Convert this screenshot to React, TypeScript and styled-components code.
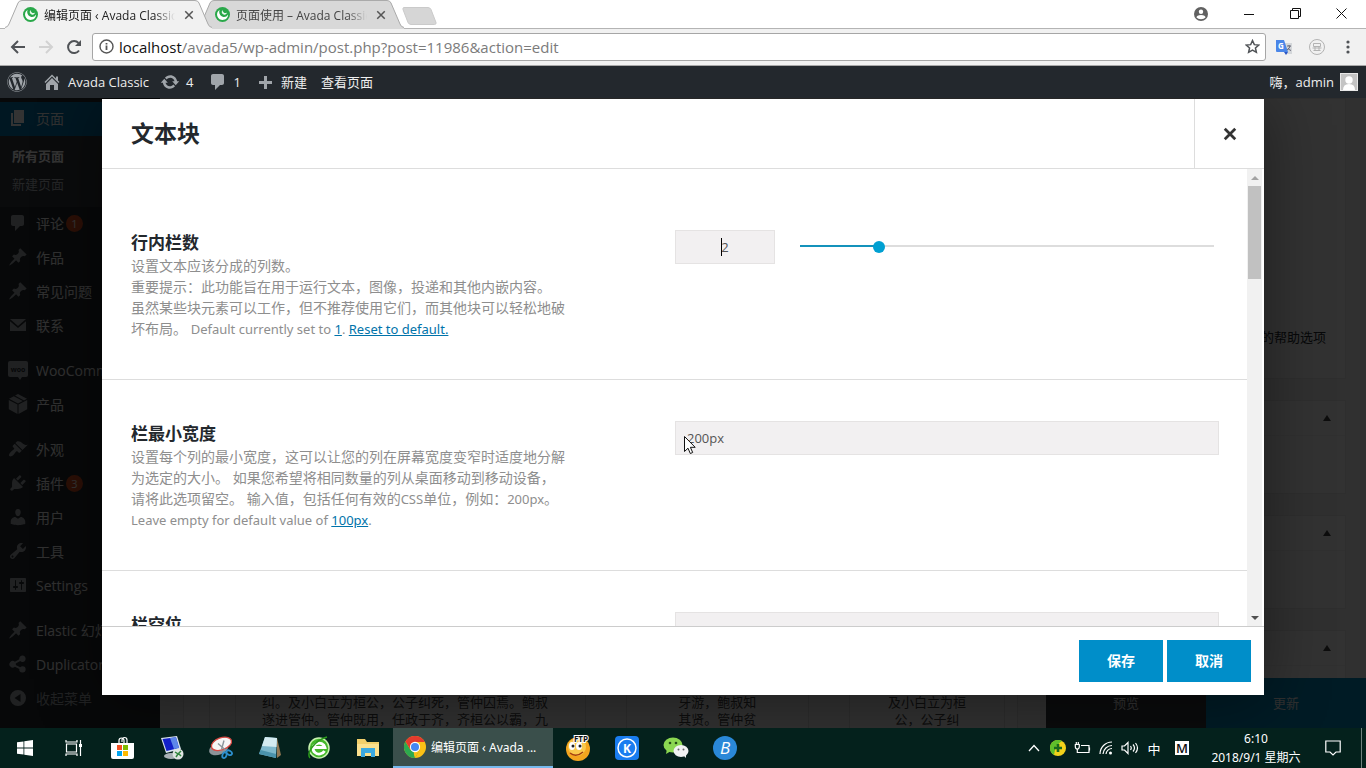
import React from "react";
import styled, { createGlobalStyle, css } from "styled-components";
import { FaWordpress } from "react-icons/fa";

const sans = `"Open Sans", "Noto Sans CJK SC", sans-serif`;
const wide = `"Noto Sans", "Noto Sans CJK SC", sans-serif`;

const GlobalStyle = createGlobalStyle`
  *, *::before, *::after { box-sizing: border-box; }
  html, body { margin: 0; padding: 0; }
  body { font-family: ${sans}; font-size: 13px; background: #fff; color: #23282d; overflow: hidden; }
  button, input { font-family: inherit; margin: 0; }
  button { border: 0; padding: 0; background: none; color: inherit; }
  svg { display: block; flex: none; }
  a { color: inherit; text-decoration: none; }
`;

const Screen = styled.div`
  display: flex;
  flex-direction: column;
  height: 100vh;
`;

/* ---------- browser window ---------- */

const TabStrip = styled.header`
  display: flex;
  height: 28px;
  background: #fff;
  padding: 0 2px 0 5px;
`;

const TabShell = styled.div<{ $active?: boolean }>`
  position: relative;
  z-index: ${(p) => (p.$active ? 2 : 1)};
  width: 207px;
  height: 29px;
  margin-right: -15px;
  padding: 0 15px 0 18px;
  display: flex;
  align-items: center;
  gap: 6px;
  font-size: 12px;
  color: ${(p) => (p.$active ? "#222" : "#444")};
`;

const TabShape = styled.svg`
  position: absolute;
  inset: 0;
  width: 100%;
  height: 100%;
  z-index: -1;
`;

const TabTitle = styled.span`
  flex: 1;
  min-width: 0;
  overflow: hidden;
  white-space: nowrap;
  mask-image: linear-gradient(to right, #000 85%, transparent);
`;

const IconButton = styled.button<{ $w?: number; $h?: number }>`
  width: ${(p) => p.$w ?? 16}px;
  height: ${(p) => p.$h ?? 16}px;
  display: flex;
  align-items: center;
  justify-content: center;
  flex: none;
`;

const NewTab = styled.button`
  margin: 7px 0 0 13px;
  width: 36px;
  height: 18px;
`;

const WindowControls = styled.div`
  display: flex;
  margin-left: auto;
  height: 27px;
`;

const Toolbar = styled.div`
  display: flex;
  align-items: center;
  height: 38px;
  padding: 0 5px 1px 4px;
  background: #f1f1f1;
  border-top: 1px solid #b4b4b4;
  border-bottom: 1px solid #a8a8a8;
  color: #505357;
`;

const Omnibox = styled.div`
  flex: 1;
  display: flex;
  align-items: center;
  gap: 5px;
  height: 28px;
  margin: 0 3px 0 4px;
  padding: 0 5px 0 6px;
  background: #fff;
  border: 1px solid #a6a6a6;
  border-radius: 3px;
`;

const Url = styled.span`
  flex: 1;
  font-size: 15px;
  line-height: 20px;
  color: #7b7b7b;
  b { font-weight: 400; color: #111; }
`;

/* ---------- WordPress admin ---------- */

const AdminBar = styled.nav`
  display: flex;
  align-items: center;
  height: 32px;
  padding: 0 8px 0 7px;
  background: #23282d;
  color: #eee;
  font-size: 13px;
  svg { color: #a0a5aa; }
`;

const BarLink = styled.a<{ $gap?: number }>`
  display: flex;
  align-items: center;
  gap: 6px;
  margin-right: ${(p) => p.$gap ?? 14}px;
  line-height: 18px;
  white-space: nowrap;
`;

const Account = styled(BarLink)`
  margin-left: auto;
  margin-right: 0;
`;

const Workspace = styled.div`
  position: relative;
  flex: 1;
  min-height: 0;
  display: flex;
  overflow: hidden;
  background: #f1f1f1;
`;

const SideMenu = styled.nav`
  width: 160px;
  flex: none;
  padding-top: 4px;
  background: #23282d;
  color: #eee;
  font-size: 14px;
`;

const MenuItem = styled.a<{ $current?: boolean; $gap?: boolean; $muted?: boolean }>`
  display: flex;
  align-items: center;
  height: 34px;
  margin-top: ${(p) => (p.$gap ? 11 : 0)}px;
  padding: 0 0 2px 8px;
  gap: 8px;
  white-space: nowrap;
  background: ${(p) => (p.$current ? "#0073aa" : "transparent")};
  color: ${(p) => (p.$muted ? "#a0a5aa" : "#eee")};
  svg { color: ${(p) => (p.$current ? "#fff" : "#a0a5aa")}; }
`;

const Count = styled.span`
  width: 17px;
  height: 17px;
  margin-left: -6px;
  border-radius: 50%;
  background: #d54e21;
  color: #fff;
  font-size: 11px;
  line-height: 17px;
  text-align: center;
`;

const SubMenu = styled.div`
  padding: 6px 12px 9px;
  background: #32373c;
  font-size: 13px;
  line-height: 28px;
`;

const SubLink = styled.a<{ $current?: boolean }>`
  display: block;
  font-weight: ${(p) => (p.$current ? 700 : 400)};
  color: ${(p) => (p.$current ? "#fff" : "#b4b9be")};
`;

const Editor = styled.main`
  flex: 1;
  display: flex;
  flex-direction: column;
  justify-content: flex-end;
  padding: 0 48px 0 23px;
`;

const Builder = styled.section`
  flex: 0 0 560px;
  display: flex;
  padding: 0 12px 0 25px;
  border: solid #ddd;
  border-width: 0 1px;
  background: #f4f4f4;
`;

const BuilderRow = styled.div`
  flex: 1;
  display: flex;
  gap: 40px;
  padding-left: 25px;
  border-left: 1px solid #ddd;
`;

const BuilderColumn = styled.div<{ $size: number; $left?: boolean }>`
  flex: ${(p) => p.$size} 1 ${(p) => p.$size}px;
  min-width: 0;
  padding: 529px ${(p) => (p.$left ? 26 : 12)}px 0;
  border: solid #ddd;
  border-width: 0 1px;
  line-height: 17px;
  text-align: ${(p) => (p.$left ? "left" : "center")};
  white-space: nowrap;
  color: #444;
`;

const Aside = styled.aside`
  width: 300px;
  flex: none;
  padding-right: 20px;
`;

const MetaBox = styled.section<{ $tall?: boolean }>`
  height: ${(p) => (p.$tall ? 281 : 94)}px;
  margin-bottom: 21px;
  background: #f8f8f8;
  border: 1px solid #e5e5e5;
  text-align: right;
`;

const HelpText = styled.p`
  margin: 0;
  padding: 228px 19px 0 0;
  line-height: 20px;
`;

const MetaHead = styled.button`
  display: flex;
  width: 100%;
  height: 35px;
  padding-right: 14px;
  align-items: center;
  justify-content: flex-end;
  border-bottom: 1px solid #eee;
`;

const PublishBar = styled.div`
  position: absolute;
  right: 0;
  bottom: 0;
  display: flex;
`;

const PublishButton = styled.button<{ $primary?: boolean }>`
  width: 160px;
  height: 50px;
  padding-bottom: 2px;
  font-size: 13px;
  color: #eee;
  background: ${(p) => (p.$primary ? "#0085ba" : "#32373c")};
`;

/* ---------- dialog ---------- */

const Overlay = styled.div`
  position: absolute;
  inset: 0;
  z-index: 5;
  display: flex;
  padding: 1px 102px 33px;
  background: rgba(0, 0, 0, 0.8);
`;

const Dialog = styled.section`
  flex: 1;
  min-width: 0;
  display: flex;
  flex-direction: column;
  background: #fff;
  box-shadow: 0 5px 60px rgba(0, 0, 0, 0.4);
`;

const DialogHead = styled.header`
  display: flex;
  align-items: center;
  height: 70px;
  flex: none;
  padding-left: 29px;
  border-bottom: 1px solid #ddd;
`;

const DialogTitle = styled.h2`
  flex: 1;
  margin: 0;
  padding-bottom: 2px;
  font-size: 23px;
  line-height: 30px;
`;

const CloseButton = styled.button`
  align-self: stretch;
  width: 70px;
  display: flex;
  align-items: center;
  justify-content: center;
  border-left: 1px solid #ddd;
`;

const DialogBody = styled.div`
  flex: 1;
  min-height: 0;
  display: flex;
  overflow: hidden;
`;

const Options = styled.div`
  flex: 1;
  min-width: 0;
  padding-top: 20px;
`;

const Option = styled.div`
  display: grid;
  grid-template-columns: 1fr 1fr;
  padding: 41px 28px 40px 29px;
  border-bottom: 1px solid #ddd;
`;

const OptionName = styled.label`
  display: block;
  padding-top: 1px;
  font-size: 17px;
  font-weight: 700;
  line-height: 24px;
`;

const Description = styled.p`
  margin: 0;
  font-size: 14px;
  line-height: 21px;
  color: #8e8e8e;
  white-space: nowrap;
  a { color: #0073aa; text-decoration: underline; }
`;

const Latin = styled.span`
  font-family: ${wide};
  font-size: 13px;
  line-height: 1;
`;

const field = css`
  height: 34px;
  border: 1px solid #e5e3e3;
  border-radius: 0;
  background: #f2f0f1;
  color: #555;
  font-size: 13px;
  outline: none;
`;

const FieldBox = styled.div`
  position: relative;
`;

const TextField = styled.input`
  ${field}
  width: 100%;
  padding: 0 11px;
`;

const RangeRow = styled.div`
  display: flex;
  align-items: flex-start;
  gap: 25px;
  padding-right: 5px;
`;

const NumberBox = styled.div`
  position: relative;
  width: 100px;
  flex: none;
`;

const NumberField = styled.input`
  ${field}
  width: 100%;
  padding: 0;
  text-align: center;
`;

const Caret = styled.span`
  position: absolute;
  left: 46px;
  top: 8px;
  width: 1px;
  height: 18px;
  background: #000;
`;

const Range = styled.input`
  flex: 1;
  min-width: 0;
  height: 34px;
  appearance: none;
  background: linear-gradient(to right, #1492bb 19%, #ddd 19%) 0 15px / 100% 2px no-repeat;
  &::-webkit-slider-thumb {
    appearance: none;
    width: 12px;
    height: 12px;
    border-radius: 50%;
    background: #00a0d2;
  }
`;

const Pointer = styled.svg`
  position: absolute;
  left: 8px;
  top: 14px;
`;

const ScrollBar = styled.div`
  width: 17px;
  flex: none;
  display: flex;
  flex-direction: column;
  align-items: center;
  justify-content: space-between;
  border-right: 2px solid #fff;
  background: #f1f1f1;
`;

const ScrollTop = styled.div`
  width: 13px;
`;

const ScrollArrow = styled.div`
  display: flex;
  justify-content: center;
`;

const Thumb = styled.div`
  height: 93px;
  background: #c1c1c1;
`;

const DialogFoot = styled.footer`
  display: flex;
  justify-content: flex-end;
  gap: 4px;
  flex: none;
  padding: 13px;
  border-top: 1px solid #ccc;
`;

const ActionButton = styled.button`
  width: 84px;
  height: 42px;
  padding-bottom: 2px;
  background: #008ec9;
  color: #fff;
  font-size: 14px;
  font-weight: 700;
`;

/* ---------- taskbar ---------- */

const Taskbar = styled.footer`
  display: flex;
  height: 40px;
  flex: none;
  background: #04211c;
  color: #fff;
  font-size: 12px;
`;

const Launcher = styled(IconButton)`
  width: 49px;
  height: 40px;
`;

const RunningApp = styled.button`
  display: flex;
  align-items: center;
  gap: 5px;
  width: 160px;
  height: 40px;
  margin-left: 1px;
  padding: 0 11px;
  background: #3a4f4b;
  border-bottom: 2px solid #76b9ed;
  font-family: ${wide};
  font-size: 12px;
  white-space: nowrap;
`;

const Tray = styled.div`
  display: flex;
  align-items: center;
  margin-left: auto;
  padding-right: 4px;
`;

const TrayItem = styled.button<{ $wide?: boolean }>`
  width: ${(p) => (p.$wide ? 32 : 24)}px;
  height: 40px;
  display: flex;
  align-items: center;
  justify-content: center;
  font-size: 13px;
`;

const Clock = styled.time`
  width: 116px;
  margin-right: 3px;
  font-family: ${wide};
  text-align: center;
  line-height: 19px;
`;

const ShowDesktop = styled.span`
  width: 1px;
  height: 40px;
  margin-left: 12px;
  background: #6f827e;
`;

/* ---------- icons ---------- */

const dash: Record<string, string> = {
  page: "M6 15V2h10v13H6zm-1 1h8v2H3V5h2v11z",
  comment: "M5 2h9c1.1 0 2 .9 2 2v7c0 1.1-.9 2-2 2h-2l-5 5v-5H5c-1.1 0-2-.9-2-2V4c0-1.1.9-2 2-2z",
  pin: "M10.44 3.02l1.82-1.82 6.36 6.35-1.83 1.82c-1.05-.68-2.48-.57-3.41.36l-.75.75c-.92.93-1.04 2.35-.35 3.41l-1.83 1.82-2.41-2.41-2.8 2.79c-.42.42-3.38 2.71-3.8 2.29s1.86-3.39 2.28-3.81l2.79-2.79L4.1 9.36l1.83-1.82c1.05.69 2.48.57 3.4-.36l.75-.75c.93-.92 1.05-2.35.36-3.41z",
  mail: "M2 4h16l-8 7-8-7zM2 6.200l8 6.800 8-6.800V16H2z",
  woo: "M2 1h16a2 2 0 012 2v12a2 2 0 01-2 2h-4l-2 3-2-3H2a2 2 0 01-2-2V3a2 2 0 012-2z",
  box: "M10 0l9 4.800-3 1.600L7 1.600zM5.800 2.300l9 4.700-4.800 2.500L1 4.800zM.8 6l8.700 4.600V20L.8 15.200zM19.200 6l-8.700 4.600V20l8.700-4.800z",
  brush: "M14.48 11.06L7.41 3.99l1.5-1.5c.5-.56 2.3-.47 3.51.32 1.21.8 1.43 1.28 2.91 2.1 1.18.64 2.45 1.26 4.45.85zm-.71.71L6.7 4.7 4.93 6.47c-.39.39-.39 1.02 0 1.41l1.06 1.06c.39.39.39 1.03 0 1.42-.6.6-1.43 1.11-2.21 1.69-.35.26-.7.53-1.01.84C1.43 14.23.4 16.08 1.4 17.07c.99 1 2.84-.03 4.18-1.36.31-.31.58-.66.85-1.02.57-.78 1.08-1.61 1.69-2.21.39-.39 1.02-.39 1.41 0l1.06 1.06c.39.39 1.02.39 1.41 0z",
  plug: "M13.11 4.36L9.87 7.6 8 5.73l3.24-3.24c.35-.34 1.05-.2 1.56.32.52.51.66 1.21.31 1.55zm-8 1.77l.91-1.12 9.01 9.01-1.19.84c-.71.71-2.63 1.16-3.82 1.16H6.14L4.9 17.26c-.59.59-1.54.59-2.12 0-.59-.58-.59-1.53 0-2.12l1.24-1.24v-3.88c0-1.13.4-3.19 1.09-3.89zm7.26 3.97l3.24-3.24c.34-.35 1.04-.21 1.55.31.52.51.66 1.21.31 1.55l-3.24 3.25z",
  user: "M10 9.25c-2.27 0-2.73-3.44-2.73-3.44C7 4.02 7.82 2 9.97 2c2.16 0 2.98 2.02 2.71 3.81 0 0-.41 3.44-2.68 3.44zm0 2.57L12.72 10c2.39 0 4.52 2.33 4.52 4.53v2.49s-3.65 1.13-7.24 1.13c-3.65 0-7.24-1.13-7.24-1.13v-2.49c0-2.25 1.94-4.48 4.47-4.48z",
  wrench: "M16.68 9.77c-1.34 1.34-3.3 1.67-4.95.99l-5.41 6.52c-.99.99-2.59.99-3.58 0s-.99-2.59 0-3.57l6.52-5.42c-.68-1.65-.35-3.61.99-4.95 1.28-1.28 3.12-1.62 4.72-1.06l-2.89 2.89 2.82 2.82 2.86-2.87c.53 1.58.18 3.39-1.08 4.65zM3.81 16.21c.4.39 1.04.39 1.43 0 .4-.4.4-1.04 0-1.43-.39-.4-1.03-.4-1.43 0-.39.39-.39 1.03 0 1.43z",
  settings: "M18 16V4c0-.55-.45-1-1-1H3c-.55 0-1 .45-1 1v12c0 .55.45 1 1 1h14c.55 0 1-.45 1-1zM8 11h1c.55 0 1 .45 1 1s-.45 1-1 1H8v1.5c0 .28-.22.5-.5.5s-.5-.22-.5-.5V13H6c-.55 0-1-.45-1-1s.45-1 1-1h1V5.5c0-.28.22-.5.5-.5s.5.22.5.5V11zm5-2h-1c-.55 0-1-.45-1-1s.45-1 1-1h1V5.500c0-.28.22-.5.5-.5s.5.22.5.5V7h1c.55 0 1 .45 1 1s-.45 1-1 1h-1v5.5c0 .28-.22.5-.5.5s-.5-.22-.5-.5V9z",
  share: "M14.500 12.200c-.9 0-1.700.4-2.300 1L7.800 10.900c.1-.5.1-.9 0-1.400l4.400-2.500a3.200 3.200 0 10-.9-1.700L6.900 7.700a3.300 3.300 0 100 5l4.400 2.300a3.200 3.200 0 103.200-2.800z",
  collapse: "M10 2a8 8 0 100 16 8 8 0 000-16zm2.500 4v8L6.500 10z",
  home: "M16 8.5l1.53 1.53-1.06 1.06L10 4.6l-6.47 6.49-1.06-1.06L10 2.5l4 4v-2h2v4zm-6-2.46l6 5.99V18h-4v-5H8v5H4v-5.970z",
  update: "M10.2 3.28c3.53 0 6.43 2.61 6.92 6h2.08l-3.5 4-3.5-4h2.32c-.45-1.97-2.21-3.45-4.32-3.45-1.45 0-2.73.71-3.54 1.78L4.95 5.66C6.23 4.2 8.11 3.28 10.2 3.28zm-.4 13.44c-3.52 0-6.43-2.61-6.92-6H.8l3.5-4c1.17 1.33 2.33 2.67 3.5 4H5.48c.45 1.97 2.21 3.45 4.32 3.45 1.45 0 2.73-.71 3.54-1.78l1.71 1.95c-1.28 1.46-3.15 2.38-5.25 2.38z",
  plus: "M17 9v3h-5v5H9v-5H4V9h5V4h3v5h5z",
};

const Dash = ({ name }: { name: string }) => (
  <svg width="20" height="20" viewBox="0 0 20 20" fill="currentColor" fillRule="evenodd" aria-hidden="true">
    <path d={dash[name]} />
    {name === "woo" && (
      <text x="10" y="12" fontSize="7" fontWeight="700" textAnchor="middle" fill="#23282d">woo</text>
    )}
  </svg>
);

const Cross = ({ size, stroke, width }: { size: number; stroke: string; width: number }) => (
  <svg width={size} height={size} viewBox="0 0 12 12" stroke={stroke} strokeWidth={width} aria-hidden="true">
    <path d="M1.500 1.500l9 9M10.500 1.500l-9 9" />
  </svg>
);

const Favicon = () => (
  <svg width="15" height="15" viewBox="0 0 16 16" aria-hidden="true">
    <circle cx="8" cy="8" r="8" fill="#2aa84a" />
    <path d="M5 2.800C2.300 4.500 1.600 7.500 2.600 10c1.200 2.900 4 4.200 6.700 3.700 2.900-.5 4.800-3 4.700-5.700-1.300 2.200-3.200 3-5.200 2.600C6.300 10 4.600 7.800 4.500 5.500 4.400 4.500 4.600 3.600 5 2.800z" fill="#fff" />
    <path d="M8 3.300c-.9 1.200-1 2.600-.3 3.700.8 1.200 2.200 1.500 3.500.9.900-.4 1.500-1.200 1.600-2.100-1 .7-2.200.8-3.200.2-.9-.6-1.500-1.600-1.600-2.700z" fill="#e9f8ed" />
  </svg>
);

const Triangle = ({ down, color }: { down?: boolean; color: string }) => (
  <svg width="8" height="17" viewBox="0 0 8 17" fill={color} aria-hidden="true">
    <path d={down ? "M0 7h8l-4 4z" : "M0 11h8l-4-4z"} />
  </svg>
);

const PanelToggle = () => (
  <svg width="8" height="7" viewBox="0 0 8 7" fill="#444" aria-hidden="true">
    <path d="M0 6h8L4 0z" />
  </svg>
);

const launchers: [string, React.ReactNode][] = [
  ["开始", <svg width="16" height="16" viewBox="0 0 16 16" fill="#fff"><path d="M0 2.300L6.500 1.400v6.200H0zM7.300 1.300L16 0v7.600H7.300zM0 8.400h6.500v6.200L0 13.700zM7.300 8.400H16V16l-8.700-1.300z" /></svg>],
  ["任务视图", <svg width="18" height="16" viewBox="0 0 18 16" fill="none" stroke="#fff" strokeWidth="1.200"><path d="M1.500 4h10v8h-10zM1 0v2h11V0M1 16v-2h11v2M15.500 0v16" /><path d="M14 4h3v3h-3z" fill="#fff" stroke="none" /></svg>],
  ["应用商店", <svg width="24" height="24" viewBox="0 0 24 24"><path d="M8 8V4.500a2.500 2.500 0 015 0V8M11 6V4a2.500 2.500 0 015 0v4" fill="none" stroke="#fff" strokeWidth="1.200" /><path d="M0 7h23v14a2 2 0 01-2 2H2a2 2 0 01-2-2z" fill="#fff" /><path d="M6 9h5v5H6z" fill="#f25022" /><path d="M12 9h5v5h-5z" fill="#7fba00" /><path d="M6 15h5v5H6z" fill="#00a4ef" /><path d="M12 15h5v5h-5z" fill="#ffb900" /></svg>],
  ["远程桌面", <svg width="24" height="24" viewBox="0 0 24 24"><path d="M1 2l16-2 4 13-15 4z" fill="#d9e3ef" /><path d="M2.500 3l13.500-1.800L19 12 6.500 15z" fill="#1220c8" /><path d="M10 2l6-.8L19 12l-5 1z" fill="#5d87ea" /><ellipse cx="11" cy="20" rx="7" ry="3" fill="#a9b1b6" /><circle cx="18" cy="18" r="5.500" fill="#dfe5e2" /><path d="M15 16l3 2-2 3M21 15l-2.500 2.500L21 20" fill="none" stroke="#32863f" strokeWidth="1.500" /></svg>],
  ["截图工具", <svg width="24" height="24" viewBox="0 0 24 24"><ellipse cx="9.500" cy="12.500" rx="10" ry="6" fill="#8c9498" transform="rotate(-22 10 12)" /><ellipse cx="12.500" cy="8" rx="10.500" ry="6" fill="#f6f6f6" stroke="#d84a44" strokeWidth="1.300" transform="rotate(-20 12 8)" /><path d="M9 7.500l8 7M15 4.500l-2.500 9" stroke="#8b959b" strokeWidth="1.400" /><ellipse cx="15.500" cy="19" rx="2" ry="3" fill="none" stroke="#2d8fce" strokeWidth="1.800" transform="rotate(20 15 19)" /><ellipse cx="20.500" cy="16.500" rx="3" ry="2" fill="none" stroke="#2d8fce" strokeWidth="1.800" transform="rotate(30 20 16)" /></svg>],
  ["记事本", <svg width="24" height="24" viewBox="0 0 24 24"><path d="M19 2l4 17-4 3z" fill="#927854" /><path d="M7 1l12 1-1 20-17-4z" fill="#7fb9cc" /><path d="M7 1l12 1-.5 9L4 10z" fill="#d4ebf0" /><path d="M1 18l17 4 .2-4L2.500 14z" fill="#4b93ac" /></svg>],
  ["360浏览器", <svg width="24" height="24" viewBox="0 0 24 24"><circle cx="12" cy="12" r="10" fill="#45b82a" stroke="#c9f3b0" strokeWidth="1.500" /><path d="M17.500 15A6 5.500 0 1118 11.500H7" fill="none" stroke="#fff" strokeWidth="2.800" /><path d="M3 22C-1 17 8 4 20 1" fill="none" stroke="#2c9c1c" strokeWidth="1.500" /></svg>],
  ["文件资源管理器", <svg width="22" height="20" viewBox="0 0 22 20"><path d="M0 1h8l2 3h12v14H0z" fill="#f2cf6b" /><path d="M0 6h22v12H0z" fill="#fbe08e" /><path d="M4 10h14v9h-4v-4H8v4H4z" fill="#3ba9e0" /></svg>],
];

const pinned: [string, React.ReactNode][] = [
  ["FTP", <svg width="26" height="26" viewBox="0 0 26 26"><circle cx="13" cy="14" r="12" fill="#f4a51f" /><circle cx="12" cy="12" r="9" fill="#fac94b" /><ellipse cx="7" cy="11" rx="3" ry="4" fill="#fff" /><ellipse cx="14" cy="11" rx="3" ry="4" fill="#fff" /><circle cx="8" cy="11" r="1.500" fill="#222" /><circle cx="15" cy="11" r="1.500" fill="#222" /><path d="M5 18q6 5 13-1" fill="none" stroke="#a33c10" strokeWidth="1.500" /><text x="16" y="7" fontSize="8" fontWeight="700" textAnchor="middle" fill="#111" stroke="#fff" strokeWidth="2" paintOrder="stroke">FTP</text></svg>],
  ["K", <svg width="24" height="24" viewBox="0 0 24 24"><rect width="24" height="24" rx="4" fill="#1a7df0" /><circle cx="12" cy="12" r="9" fill="none" stroke="#fff" strokeWidth="1.500" /><text x="12" y="16.500" fontSize="12" fontWeight="700" textAnchor="middle" fill="#fff">K</text></svg>],
  ["微信", <svg width="26" height="22" viewBox="0 0 26 22"><ellipse cx="10" cy="8" rx="9.500" ry="7.500" fill="#8bd751" /><path d="M4 12l-1 5 5-3z" fill="#8bd751" /><circle cx="7" cy="6" r="1.300" fill="#234d16" /><circle cx="13" cy="6" r="1.300" fill="#234d16" /><ellipse cx="18" cy="14" rx="7.500" ry="6" fill="#f1f3f3" /><path d="M20 18l3 3v-4z" fill="#f1f3f3" /><circle cx="15.500" cy="12.500" r="1" fill="#666" /><circle cx="20.500" cy="12.500" r="1" fill="#666" /></svg>],
  ["B", <svg width="24" height="24" viewBox="0 0 24 24"><circle cx="12" cy="12" r="12" fill="#2a88d8" /><text x="12" y="18" fontSize="17" fontStyle="italic" textAnchor="middle" fill="#fff">B</text></svg>],
];

const Chrome = () => (
  <svg width="22" height="22" viewBox="0 0 24 24" aria-hidden="true">
    <circle cx="12" cy="12" r="12" fill="#fbc116" />
    <path d="M1.600 6A12 12 0 0012 24l5-9-10 0z" fill="#2da94f" />
    <path d="M12 6.500h10.700A12 12 0 0012 24l5.200-9z" fill="#fbc116" />
    <path d="M1.600 6A12 12 0 0122.700 6.500H12L7 15z" fill="#e33b2e" />
    <circle cx="12" cy="12" r="5.600" fill="#fff" />
    <circle cx="12" cy="12" r="4.400" fill="#4587f3" />
  </svg>
);

const menuItems: { icon: string; label: string; count?: number; gap?: boolean; muted?: boolean }[] = [
  { icon: "comment", label: "评论", count: 1 },
  { icon: "pin", label: "作品" },
  { icon: "pin", label: "常见问题" },
  { icon: "mail", label: "联系" },
  { icon: "woo", label: "WooCommerce", gap: true },
  { icon: "box", label: "产品" },
  { icon: "brush", label: "外观", gap: true },
  { icon: "plug", label: "插件", count: 3 },
  { icon: "user", label: "用户" },
  { icon: "wrench", label: "工具" },
  { icon: "settings", label: "Settings" },
  { icon: "pin", label: "Elastic 幻灯片", gap: true },
  { icon: "share", label: "Duplicator" },
  { icon: "collapse", label: "收起菜单", muted: true },
];

const BrowserTab = ({ title, active }: { title: string; active?: boolean }) => (
  <TabShell $active={active}>
    <TabShape viewBox="0 0 207 29" preserveAspectRatio="none">
      <path d="M0 27.500Q3 27 4 24L13 3Q14 .5 17 .5H190Q193 .5 194 3L203 24Q204 27 207 27.500V29H0z" fill={active ? "#f1f1f1" : "#d8d8d8"} />
      <path d="M0 27.500Q3 27 4 24L13 3Q14 .5 17 .5H190Q193 .5 194 3L203 24Q204 27 207 27.500" fill="none" stroke="#aaa" />
    </TabShape>
    <Favicon />
    <TabTitle>{title}</TabTitle>
    <IconButton aria-label="关闭标签页"><Cross size={10} stroke="#555" width={1.8} /></IconButton>
  </TabShell>
);

export default function App() {
  return (
    <Screen>
      <GlobalStyle />
      <TabStrip>
        <BrowserTab active title="编辑页面 ‹ Avada Classic" />
        <BrowserTab title="页面使用 – Avada Classic" />
        <NewTab aria-label="新标签页">
          <svg width="36" height="18" viewBox="0 0 36 18"><path d="M2 .5h24q2 0 3 2l5 13q.5 2-1.500 2H9q-2 0-3-2L1 2.500Q.5.5 2 .5z" fill="#d6d6d6" stroke="#cacaca" /></svg>
        </NewTab>
        <WindowControls>
          <IconButton $w={51} $h={27} aria-label="用户">
            <svg width="14" height="14" viewBox="0 0 14 14"><circle cx="7" cy="7" r="7" fill="#616161" /><circle cx="7" cy="4.800" r="2.200" fill="#fff" /><path d="M2.500 10.500q0-2.500 4.500-2.500t4.500 2.500Q10 12.200 7 12.200t-4.500-1.700z" fill="#fff" /></svg>
          </IconButton>
          <IconButton $w={46} $h={27} aria-label="最小化"><svg width="10" height="2"><path d="M0 1h10" stroke="#111" strokeWidth="1" shapeRendering="crispEdges" /></svg></IconButton>
          <IconButton $w={46} $h={27} aria-label="还原"><svg width="11" height="11" fill="none" stroke="#111"><path d="M.5 2.500h8v8h-8zM2.500 2.500v-2h8v8h-2" /></svg></IconButton>
          <IconButton $w={46} $h={27} aria-label="关闭"><svg width="11" height="11" stroke="#111"><path d="M.5.5l10 10M10.500.5l-10 10" /></svg></IconButton>
        </WindowControls>
      </TabStrip>
      <Toolbar>
        <IconButton $w={28} $h={28} aria-label="后退"><svg width="16" height="14" fill="none" stroke="#505357" strokeWidth="2"><path d="M15 7H2M8 1L2 7l6 6" /></svg></IconButton>
        <IconButton $w={28} $h={28} aria-label="前进"><svg width="16" height="14" fill="none" stroke="#d2d2d2" strokeWidth="2"><path d="M1 7h13M8 1l6 6-6 6" /></svg></IconButton>
        <IconButton $w={28} $h={28} aria-label="重新加载"><svg width="16" height="16" fill="none" stroke="#505357" strokeWidth="2"><path d="M13 11.500A6 6 0 1112.500 4" /><path d="M15 1v6H9z" fill="#505357" stroke="none" /></svg></IconButton>
        <Omnibox>
          <svg width="15" height="15" viewBox="0 0 15 15" fill="none" stroke="#555" strokeWidth="1.400"><circle cx="7.500" cy="7.500" r="6.500" /><path d="M7.500 6.500V11M7.500 4v1.500" strokeWidth="1.800" /></svg>
          <Url><b>localhost</b>/avada5/wp-admin/post.php?post=11986&amp;action=edit</Url>
          <IconButton aria-label="为此网页添加书签"><svg width="15" height="15" viewBox="0 0 24 24" fill="none" stroke="#505357" strokeWidth="2.400"><path d="M12 2.500l2.900 6.500 7.100.7-5.300 4.700 1.500 7L12 17.800l-6.200 3.600 1.500-7L2 9.700 9.100 9z" /></svg></IconButton>
        </Omnibox>
        <IconButton $w={30} $h={28} aria-label="翻译">
          <svg width="17" height="16" viewBox="0 0 17 16"><path d="M7 4h9v11h-6z" fill="#d4d7da" /><path d="M0 1h8l4 12H1a1 1 0 01-1-1z" fill="#4a86e8" /><path d="M8 13h4l-2 3z" fill="#2a56c6" /><text x="4.800" y="9.500" fontSize="8" fontWeight="700" textAnchor="middle" fill="#fff">G</text><path d="M11 7h4M13 6v1M14 7q-.5 3-3 4M12 9q1 2 3 2.500" stroke="#667" fill="none" /></svg>
        </IconButton>
        <IconButton $w={36} $h={28} aria-label="扩展程序">
          <svg width="16" height="16" fill="none" stroke="#b3b3b3"><circle cx="8" cy="8" r="7.500" /><path d="M4.500 4.500h7v3h-7zM3.500 9h9M4.500 11.500h7M6 7.500v4M10 7.500v4" /></svg>
        </IconButton>
        <IconButton $w={26} $h={28} aria-label="菜单"><svg width="4" height="14" fill="#505357"><circle cx="2" cy="2" r="1.600" /><circle cx="2" cy="7" r="1.600" /><circle cx="2" cy="12" r="1.600" /></svg></IconButton>
      </Toolbar>

      <AdminBar>
        <BarLink href="#wp" $gap={15} aria-label="WordPress"><FaWordpress size={20} /></BarLink>
        <BarLink href="#site" $gap={11}><Dash name="home" />Avada Classic</BarLink>
        <BarLink href="#updates"><Dash name="update" />4</BarLink>
        <BarLink href="#comments"><Dash name="comment" />1</BarLink>
        <BarLink href="#new"><Dash name="plus" />新建</BarLink>
        <BarLink href="#view">查看页面</BarLink>
        <Account href="#me">嗨，admin
          <svg width="18" height="18" viewBox="0 0 18 18"><path d="M0 0h18v18H0z" fill="#e8e8e8" /><path d="M1 1h16v16H1z" fill="#c4c4c4" /><circle cx="9" cy="7" r="3.700" fill="#fff" /><path d="M3 17q0-6 6-6t6 6z" fill="#fff" /></svg>
        </Account>
      </AdminBar>

      <Workspace>
        <SideMenu>
          <MenuItem href="#pages" $current><Dash name="page" />页面</MenuItem>
          <SubMenu>
            <SubLink href="#all" $current>所有页面</SubLink>
            <SubLink href="#add">新建页面</SubLink>
          </SubMenu>
          {menuItems.map((m) => (
            <MenuItem key={m.label} href={"#" + m.icon} $gap={m.gap} $muted={m.muted}>
              <Dash name={m.icon} />{m.label}{m.count && <Count>{m.count}</Count>}
            </MenuItem>
          ))}
        </SideMenu>
        <Editor>
          <Builder>
            <BuilderRow>
              <BuilderColumn $size={350} $left>纠。及小白立为桓公，公子纠死，管仲囚焉。鲍叔<br />遂进管仲。管仲既用，任政于齐，齐桓公以霸，九</BuilderColumn>
              <BuilderColumn $size={183}>牙游，鲍叔知<br />其贤。管仲贫</BuilderColumn>
              <BuilderColumn $size={156}>及小白立为桓<br />公，公子纠</BuilderColumn>
            </BuilderRow>
          </Builder>
        </Editor>
        <Aside>
          <MetaBox $tall><HelpText>的帮助选项</HelpText></MetaBox>
          {["属性", "图像", "格式"].map((k) => (
            <MetaBox key={k}><MetaHead aria-label={k}><PanelToggle /></MetaHead></MetaBox>
          ))}
        </Aside>
        <PublishBar>
          <PublishButton>预览</PublishButton>
          <PublishButton $primary>更新</PublishButton>
        </PublishBar>

        <Overlay>
          <Dialog role="dialog" aria-labelledby="dialog-title">
            <DialogHead>
              <DialogTitle id="dialog-title">文本块</DialogTitle>
              <CloseButton aria-label="关闭"><Cross size={14} stroke="#333" width={2.4} /></CloseButton>
            </DialogHead>
            <DialogBody>
              <Options>
                <Option>
                  <div>
                    <OptionName htmlFor="columns">行内栏数</OptionName>
                    <Description>
                      设置文本应该分成的列数。<br />
                      重要提示：此功能旨在用于运行文本，图像，投递和其他内嵌内容。<br />
                      虽然某些块元素可以工作，但不推荐使用它们，而其他块可以轻松地破<br />
                      坏布局。 <Latin>Default currently set to <a href="#default">1</a>. <a href="#reset">Reset to default.</a></Latin>
                    </Description>
                  </div>
                  <RangeRow>
                    <NumberBox>
                      <NumberField id="columns" type="text" defaultValue="2" />
                      <Caret />
                    </NumberBox>
                    <Range type="range" min={0} max={11} defaultValue={2} aria-label="行内栏数" />
                  </RangeRow>
                </Option>
                <Option>
                  <div>
                    <OptionName htmlFor="min-width">栏最小宽度</OptionName>
                    <Description>
                      设置每个列的最小宽度，这可以让您的列在屏幕宽度变窄时适度地分解<br />
                      为选定的大小。 如果您希望将相同数量的列从桌面移动到移动设备，<br />
                      请将此选项留空。 输入值，包括任何有效的<Latin>CSS</Latin>单位，例如：<Latin>200px</Latin>。<br />
                      <Latin>Leave empty for default value of <a href="#hundred">100px</a>.</Latin>
                    </Description>
                  </div>
                  <FieldBox>
                    <TextField id="min-width" type="text" defaultValue="200px" />
                    <Pointer width="13" height="20" viewBox="0 0 13 20"><path d="M1.500 1.500v15l3.500-3.300 2.300 5.300 2.400-1-2.300-5.200h4.800z" fill="#fff" stroke="#111" /></Pointer>
                  </FieldBox>
                </Option>
                <Option>
                  <OptionName htmlFor="spacing">栏空位</OptionName>
                  <TextField id="spacing" type="text" />
                </Option>
              </Options>
              <ScrollBar>
                <ScrollTop>
                  <ScrollArrow><Triangle color="#a3a3a3" /></ScrollArrow>
                  <Thumb />
                </ScrollTop>
                <Triangle down color="#505050" />
              </ScrollBar>
            </DialogBody>
            <DialogFoot>
              <ActionButton>保存</ActionButton>
              <ActionButton>取消</ActionButton>
            </DialogFoot>
          </Dialog>
        </Overlay>
      </Workspace>

      <Taskbar>
        {launchers.map(([name, icon]) => <Launcher key={name} aria-label={name}>{icon}</Launcher>)}
        <RunningApp><Chrome />编辑页面 ‹ Avada ...</RunningApp>
        {pinned.map(([name, icon]) => <Launcher key={name} aria-label={name}>{icon}</Launcher>)}
        <Tray>
          <TrayItem aria-label="显示隐藏的图标"><svg width="12" height="8" fill="none" stroke="#fff" strokeWidth="1.300"><path d="M1 7l5-5.500L11 7" /></svg></TrayItem>
          <TrayItem aria-label="360"><svg width="16" height="16"><circle cx="8" cy="8" r="8" fill="#f2d21b" /><path d="M0 8a8 8 0 0112-7Q5 5 4 15A8 8 0 010 8z" fill="#5fbf2b" /><path d="M8 4v8M4 8h8" stroke="#17691d" strokeWidth="2.600" /></svg></TrayItem>
          <TrayItem aria-label="电池"><svg width="17" height="13" fill="none" stroke="#fff" strokeWidth="1.200"><path d="M7 3.500h8v7H6M15.500 5.500v3M.8 2.500h5M1.300 2.500v2q0 2.500 2 2.500t2-2.500v-2M2.300 0v2M4.300 0v2M3.300 7v3.500H6" /></svg></TrayItem>
          <TrayItem aria-label="网络"><svg width="14" height="14" fill="none" stroke="#fff" strokeWidth="1.200"><path d="M1 13A12 12 0 0113 1M4 13a9 9 0 019-8.500M7 13a6 6 0 016-5.500" /><circle cx="11.500" cy="12" r="1.500" fill="#fff" stroke="none" /></svg></TrayItem>
          <TrayItem aria-label="音量"><svg width="18" height="14" fill="none" stroke="#fff" strokeWidth="1.200"><path d="M1 5h2.500L7 1.500v11L3.500 9H1zM9.500 5q1.500 2 0 4M12 3.500q3 3.500 0 7M14.500 2q4 5 0 10" /></svg></TrayItem>
          <TrayItem>中</TrayItem>
          <TrayItem $wide aria-label="输入法"><svg width="14" height="14"><path d="M0 0h14v14H0z" fill="#fff" /><text x="7" y="12" fontSize="13" fontWeight="600" textAnchor="middle" fill="#111">M</text></svg></TrayItem>
          <Clock>6:10<br />2018/9/1 星期六</Clock>
          <TrayItem $wide aria-label="通知"><svg width="16" height="16" fill="none" stroke="#fff" strokeWidth="1.200"><path d="M.8 1h14.400v11H11l-3 3-3-3H.8z" /></svg></TrayItem>
          <ShowDesktop />
        </Tray>
      </Taskbar>
    </Screen>
  );
}
